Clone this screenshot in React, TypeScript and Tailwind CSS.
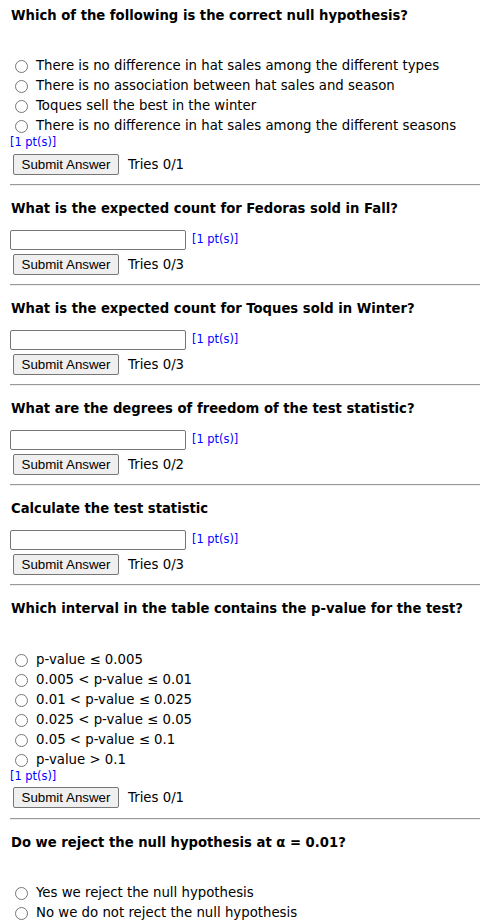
import { ReactNode } from 'react';

const FONT = '[font-family:"DejaVu_Sans",Verdana,sans-serif]';

function Rule() {
    return <div className="h-0 border-t border-b border-t-[#9a9a9a] border-b-[#eeeeee]" />;
}

function Heading({ children, first }: { children: ReactNode; first?: boolean }) {
    return (
        <div className={`h-[30px] pt-[2px] flex items-center pl-px font-bold text-[13.2px] text-black ${first ? '' : 'mt-[7px]'}`}>
            {children}
        </div>
    );
}

function Points({ className = '' }: { className?: string }) {
    return <span className={`text-[11.4px] text-[#0000ff] ${className}`}>[1 pt(s)]</span>;
}

function SubmitRow({ tries, className = '' }: { tries: string; className?: string }) {
    return (
        <div className={`flex items-center ${className}`}>
            <button className="ml-[3px] h-[21px] w-[106px] border border-[#767676] bg-[#efefef] rounded-[2px] text-[13.33px] text-black [font-family:'Liberation_Sans',Arial,sans-serif]">
                Submit Answer
            </button>
            <span className="ml-[9px] text-[13.3px] text-black">Tries {tries}</span>
        </div>
    );
}

function Choices({ options, top }: { options: string[]; top: string }) {
    return (
        <div className={top}>
            {options.map((o) => (
                <label key={o} className="h-[20px] pt-[2px] flex items-center text-[13.3px] text-black">
                    <input type="radio" className="m-0 ml-[5px] mr-[8px] w-[13px] h-[13px]" />
                    <span>{o}</span>
                </label>
            ))}
        </div>
    );
}

function InputQuestion({ title, tries }: { title: string; tries: string }) {
    return (
        <div>
            <Heading>{title}</Heading>
            <div className="mt-[7px] flex items-center">
                <input type="text" className="w-[176px] h-[20px] border border-[#767676] rounded-[2px] bg-white" />
                <Points className="ml-[6px]" />
            </div>
            <SubmitRow tries={tries} className="mt-[4px]" />
            <div className="mt-[9px]">
                <Rule />
            </div>
        </div>
    );
}

export default function App() {
    return (
        <div className={`w-[480px] min-h-[922px] bg-white pl-[10px] overflow-hidden ${FONT}`}>
            <Heading first>Which of the following is the correct null hypothesis?</Heading>
            <Choices
                top="mt-[25px]"
                options={[
                    'There is no difference in hat sales among the different types',
                    'There is no association between hat sales and season',
                    'Toques sell the best in the winter',
                    'There is no difference in hat sales among the different seasons',
                ]}
            />
            <div className="h-[16px] flex items-center">
                <Points />
            </div>
            <SubmitRow tries="0/1" className="mt-[3px]" />
            <div className="mt-[9px]">
                <Rule />
            </div>

            <InputQuestion title="What is the expected count for Fedoras sold in Fall?" tries="0/3" />
            <InputQuestion title="What is the expected count for Toques sold in Winter?" tries="0/3" />
            <InputQuestion title="What are the degrees of freedom of the test statistic?" tries="0/2" />
            <InputQuestion title="Calculate the test statistic" tries="0/3" />

            <Heading>Which interval in the table contains the p-value for the test?</Heading>
            <Choices
                top="mt-[26px]"
                options={[
                    'p-value ≤ 0.005',
                    '0.005 < p-value ≤ 0.01',
                    '0.01 < p-value ≤ 0.025',
                    '0.025 < p-value ≤ 0.05',
                    '0.05 < p-value ≤ 0.1',
                    'p-value > 0.1',
                ]}
            />
            <div className="h-[16px] flex items-center">
                <Points />
            </div>
            <SubmitRow tries="0/1" className="mt-[2px]" />
            <div className="mt-[10px]">
                <Rule />
            </div>

            <Heading>Do we reject the null hypothesis at α = 0.01?</Heading>
            <Choices
                top="mt-[25px]"
                options={['Yes we reject the null hypothesis', 'No we do not reject the null hypothesis']}
            />
        </div>
    );
}
